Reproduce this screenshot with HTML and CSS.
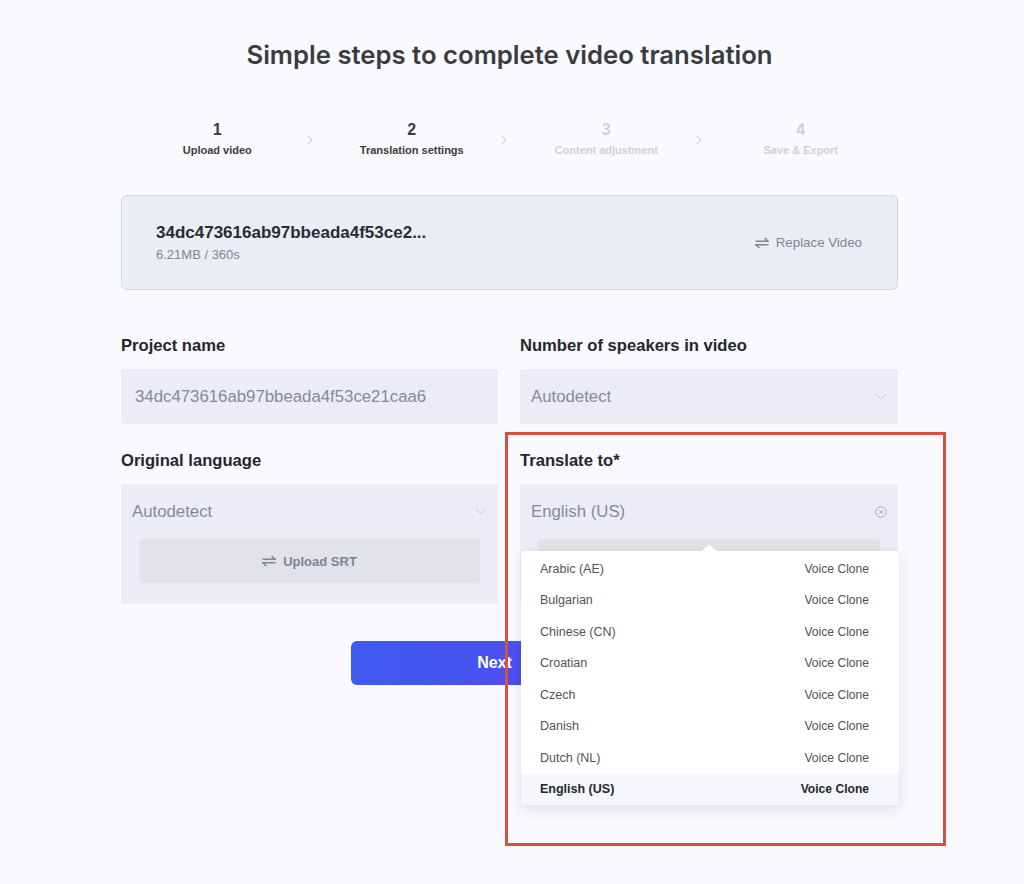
FILE: index.html
```html
<!DOCTYPE html>
<html lang="en">
<head>
    <meta charset="UTF-8">
    <title>Simple steps to complete video translation</title>
    <link rel="stylesheet" href="styles.css">
</head>
<body>
    <div class="container">
        <h1>Simple steps to complete video translation</h1>

        <div class="steps">
            <div class="step active"><b>1</b><span>Upload video</span></div>
            <svg class="step-arrow" viewBox="0 0 8 10"><path d="M1.5 1l4.5 4-4.5 4"/></svg>
            <div class="step active"><b>2</b><span>Translation settings</span></div>
            <svg class="step-arrow" viewBox="0 0 8 10"><path d="M1.5 1l4.5 4-4.5 4"/></svg>
            <div class="step"><b>3</b><span>Content adjustment</span></div>
            <svg class="step-arrow" viewBox="0 0 8 10"><path d="M1.5 1l4.5 4-4.5 4"/></svg>
            <div class="step"><b>4</b><span>Save &amp; Export</span></div>
        </div>

        <div class="file-card">
            <div>
                <div class="file-name">34dc473616ab97bbeada4f53ce2...</div>
                <div class="file-meta">6.21MB / 360s</div>
            </div>
            <div class="replace">
                <svg class="swap-icon" viewBox="0 0 14 12"><path d="M0.5 4.2h12.5L9.6 1M13.5 7.8H1L4.4 11"/></svg>
                Replace Video
            </div>
        </div>

        <div class="form-grid">
            <div class="field">
                <label>Project name</label>
                <div class="input name-input">34dc473616ab97bbeada4f53ce21caa6</div>
            </div>
            <div class="field">
                <label>Number of speakers in video</label>
                <div class="input">
                    Autodetect
                    <svg class="chevron" viewBox="0 0 12 7"><path d="M1 1l5 5 5-5"/></svg>
                </div>
            </div>
            <div class="field">
                <label>Original language</label>
                <div class="select-box">
                    <div class="input">
                        Autodetect
                        <svg class="chevron" viewBox="0 0 12 7"><path d="M1 1l5 5 5-5"/></svg>
                    </div>
                    <div class="srt-btn">
                        <svg class="swap-icon" viewBox="0 0 14 12"><path d="M0.5 4.2h12.5L9.6 1M13.5 7.8H1L4.4 11"/></svg>
                        Upload SRT
                    </div>
                </div>
            </div>
            <div class="field translate-field">
                <label>Translate to*</label>
                <div class="select-box">
                    <div class="input">
                        English (US)
                        <svg class="clear" viewBox="0 0 12 12"><circle cx="6" cy="6" r="5.2"/><path d="M4.2 4.2l3.6 3.6M7.8 4.2l-3.6 3.6"/></svg>
                    </div>
                    <div class="srt-btn"></div>
                </div>
                <div class="dropdown">
                    <div class="dropdown-row"><span>Arabic (AE)</span><span class="tag">Voice Clone</span></div>
                    <div class="dropdown-row"><span>Bulgarian</span><span class="tag">Voice Clone</span></div>
                    <div class="dropdown-row"><span>Chinese (CN)</span><span class="tag">Voice Clone</span></div>
                    <div class="dropdown-row"><span>Croatian</span><span class="tag">Voice Clone</span></div>
                    <div class="dropdown-row"><span>Czech</span><span class="tag">Voice Clone</span></div>
                    <div class="dropdown-row"><span>Danish</span><span class="tag">Voice Clone</span></div>
                    <div class="dropdown-row"><span>Dutch (NL)</span><span class="tag">Voice Clone</span></div>
                    <div class="dropdown-row selected"><span>English (US)</span><span class="tag">Voice Clone</span></div>
                </div>
            </div>
        </div>

        <button class="next-btn">Next</button>
    </div>

    <div class="highlight"></div>
</body>
</html>
```

FILE: styles.css
```css
html, body {
    height: 100%;
}
body {
    margin: 0;
    background-color: #f9f9fe;
    font-family: "Liberation Sans", Arial, sans-serif;
    color: #25272d;
    overflow: hidden;
}
.container {
    width: 777px;
    margin-left: 121px;
    padding-top: 40px;
}
h1 {
    margin: 0;
    font-family: Inter, sans-serif;
    font-size: 25.7px;
    font-weight: 600;
    line-height: 30px;
    text-align: center;
    color: #3a3c42;
}
.steps {
    display: flex;
    align-items: center;
    margin-top: 50px;
    padding-left: 3px;
    height: 40px;
}
.step {
    flex: none;
    width: 186.5px;
    text-align: center;
    color: #cfd1d6;
}
.step.active {
    color: #3a3c42;
}
.step b {
    display: block;
    font-size: 16px;
    line-height: 20px;
}
.step span {
    display: block;
    font-size: 11px;
    font-weight: bold;
    line-height: 20px;
}
.step-arrow {
    flex: none;
    width: 8px;
    height: 10px;
    margin: 0 5px 0 -5px;
    fill: none;
    stroke: #c4c6cc;
    stroke-width: 1;
}
.file-card {
    display: flex;
    justify-content: space-between;
    align-items: center;
    box-sizing: border-box;
    height: 95px;
    margin-top: 35px;
    padding: 0 35px 0 34px;
    background-color: #e9eef2;
    border: 1px dotted #b7c5ca;
    border-radius: 6px;
}
.file-name {
    font-size: 17px;
    font-weight: bold;
    line-height: 22px;
    color: #2a2c33;
}
.file-meta {
    margin-top: 3px;
    font-size: 13px;
    line-height: 16px;
    color: #7e8793;
}
.replace {
    display: flex;
    align-items: center;
    gap: 7px;
    font-size: 13.3px;
    color: #7d8591;
}
.swap-icon {
    width: 14px;
    height: 12px;
    fill: none;
    stroke: #7d8591;
    stroke-width: 1.5;
}
.form-grid {
    display: grid;
    grid-template-columns: 377px 378px;
    column-gap: 22px;
    margin-top: 44px;
}
.field {
    position: relative;
    display: flex;
    flex-direction: column;
}
.field label {
    height: 24px;
    margin-bottom: 11px;
    font-size: 16.6px;
    font-weight: bold;
    line-height: 24px;
    color: #25272d;
}
.field:nth-child(n+3) label {
    margin-top: 25px;
}
.input {
    display: flex;
    justify-content: space-between;
    align-items: center;
    box-sizing: border-box;
    height: 55px;
    padding: 0 11px;
    background-color: #ecedf4;
    border-radius: 3px;
    font-size: 16.8px;
    color: #848a96;
}
.name-input {
    padding-left: 14px;
}
.chevron {
    width: 12px;
    height: 7px;
    fill: none;
    stroke: #c8cad2;
    stroke-width: 1;
}
.clear {
    width: 12px;
    height: 12px;
    fill: none;
    stroke: #a8adb6;
    stroke-width: 1;
}
.select-box {
    height: 120px;
    background-color: #ecedf4;
    border-radius: 3px;
}
.srt-btn {
    display: flex;
    justify-content: center;
    align-items: center;
    gap: 7px;
    height: 44px;
    margin: 0 18px;
    background-color: #e1e3e8;
    border-radius: 4px;
    font-size: 13px;
    font-weight: bold;
    color: #7d8591;
}
.dropdown {
    position: absolute;
    top: 127px;
    left: 1px;
    width: 378px;
    padding-top: 2px;
    background-color: #fff;
    border-radius: 3px 3px 0 0;
    box-shadow: 0 4px 14px rgba(40, 50, 80, 0.13);
}
.dropdown::before {
    content: "";
    position: absolute;
    top: -5px;
    left: 183px;
    width: 10px;
    height: 10px;
    background-color: #fff;
    transform: rotate(45deg);
}
.dropdown-row {
    display: flex;
    justify-content: space-between;
    align-items: center;
    height: 31.5px;
    padding: 0 30px 0 19px;
    font-size: 12.5px;
    color: #50535b;
}
.dropdown-row .tag {
    font-size: 12.1px;
}
.dropdown-row.selected {
    background-color: #f5f6fa;
    font-weight: bold;
    color: #25272d;
}
.next-btn {
    display: block;
    width: 287px;
    height: 44px;
    margin: 37px 0 0 230px;
    padding: 0;
    background: linear-gradient(90deg, #3f5af0, #5249ef);
    border: none;
    border-radius: 6px;
    font-family: inherit;
    font-size: 16px;
    font-weight: bold;
    color: #fff;
}
.highlight {
    position: absolute;
    left: 505px;
    top: 432px;
    width: 441px;
    height: 414px;
    box-sizing: border-box;
    border: 3px solid #d8503c;
}
```
